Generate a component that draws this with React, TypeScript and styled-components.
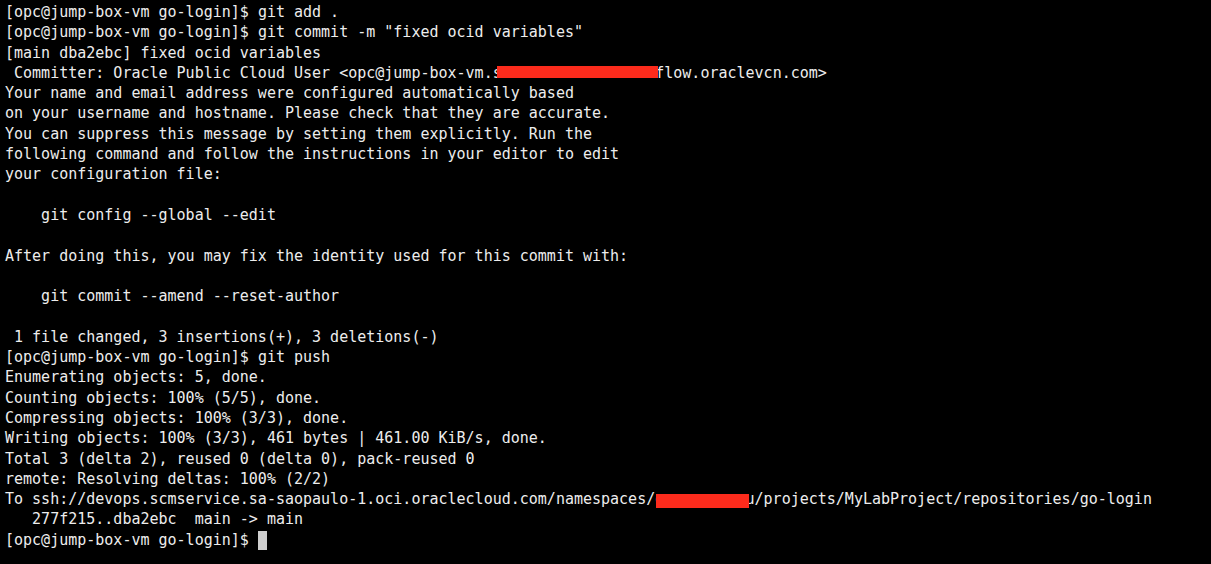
import React from "react";
import styled, { createGlobalStyle } from "styled-components";

const GlobalStyle = createGlobalStyle`
  html, body {
    margin: 0;
    padding: 0;
    background: #000;
  }
  #root {
    min-height: 564px;
    background: #000;
  }
`;

const Terminal = styled.div`
  box-sizing: border-box;
  width: 1211px;
  height: 564px;
  overflow: hidden;
  background: #000;
  padding: 2px 0 0 5px;
  font-family: "DejaVu Sans Mono", "Liberation Mono", monospace;
  font-size: 15px;
  line-height: 20.3px;
  color: #ededed;
`;

const Line = styled.div`
  white-space: pre;
  height: 20.3px;
`;

const Redact = styled.span<{ $l: number; $r: number; $t: number; $b: number }>`
  position: relative;
  &::after {
    content: "";
    position: absolute;
    left: ${(p) => p.$l}px;
    right: ${(p) => p.$r}px;
    top: ${(p) => p.$t}px;
    bottom: ${(p) => p.$b}px;
    background: #fc2b1c;
  }
`;

const Cursor = styled.span`
  display: inline-block;
  width: 9px;
  height: 19px;
  background: #cfcfcf;
  vertical-align: -5px;
`;

const PROMPT = "[opc@jump-box-vm go-login]$ ";

export default function App() {
  return (
    <>
      <GlobalStyle />
      <Terminal>
        <Line>{PROMPT}git add .</Line>
        <Line>{PROMPT}git commit -m "fixed ocid variables"</Line>
        <Line>[main dba2ebc] fixed ocid variables</Line>
        <Line>
          {" Committer: Oracle Public Cloud User <opc@jump-box-vm.s"}
          <Redact $l={-5} $r={-3} $t={2.5} $b={4}>ub16xxx7EZL6xxxxe</Redact>
          {"flow.oraclevcn.com>"}
        </Line>
        <Line>Your name and email address were configured automatically based</Line>
        <Line>on your username and hostname. Please check that they are accurate.</Line>
        <Line>You can suppress this message by setting them explicitly. Run the</Line>
        <Line>following command and follow the instructions in your editor to edit</Line>
        <Line>your configuration file:</Line>
        <Line> </Line>
        <Line>{"    git config --global --edit"}</Line>
        <Line> </Line>
        <Line>After doing this, you may fix the identity used for this commit with:</Line>
        <Line> </Line>
        <Line>{"    git commit --amend --reset-author"}</Line>
        <Line> </Line>
        <Line>{" 1 file changed, 3 insertions(+), 3 deletions(-)"}</Line>
        <Line>{PROMPT}git push</Line>
        <Line>Enumerating objects: 5, done.</Line>
        <Line>Counting objects: 100% (5/5), done.</Line>
        <Line>Compressing objects: 100% (3/3), done.</Line>
        <Line>Writing objects: 100% (3/3), 461 bytes | 461.00 KiB/s, done.</Line>
        <Line>Total 3 (delta 2), reused 0 (delta 0), pack-reused 0</Line>
        <Line>remote: Resolving deltas: 100% (2/2)</Line>
        <Line>
          {"To ssh://devops.scmservice.sa-saopaulo-1.oci.oraclecloud.com/namespaces/g"}
          <Redact $l={-8} $r={-3} $t={3.5} $b={0}>rxxxxxxxx</Redact>
          {"u/projects/MyLabProject/repositories/go-login"}
        </Line>
        <Line>{"   277f215..dba2ebc  main -> main"}</Line>
        <Line>
          {PROMPT}
          <Cursor />
        </Line>
      </Terminal>
    </>
  );
}
